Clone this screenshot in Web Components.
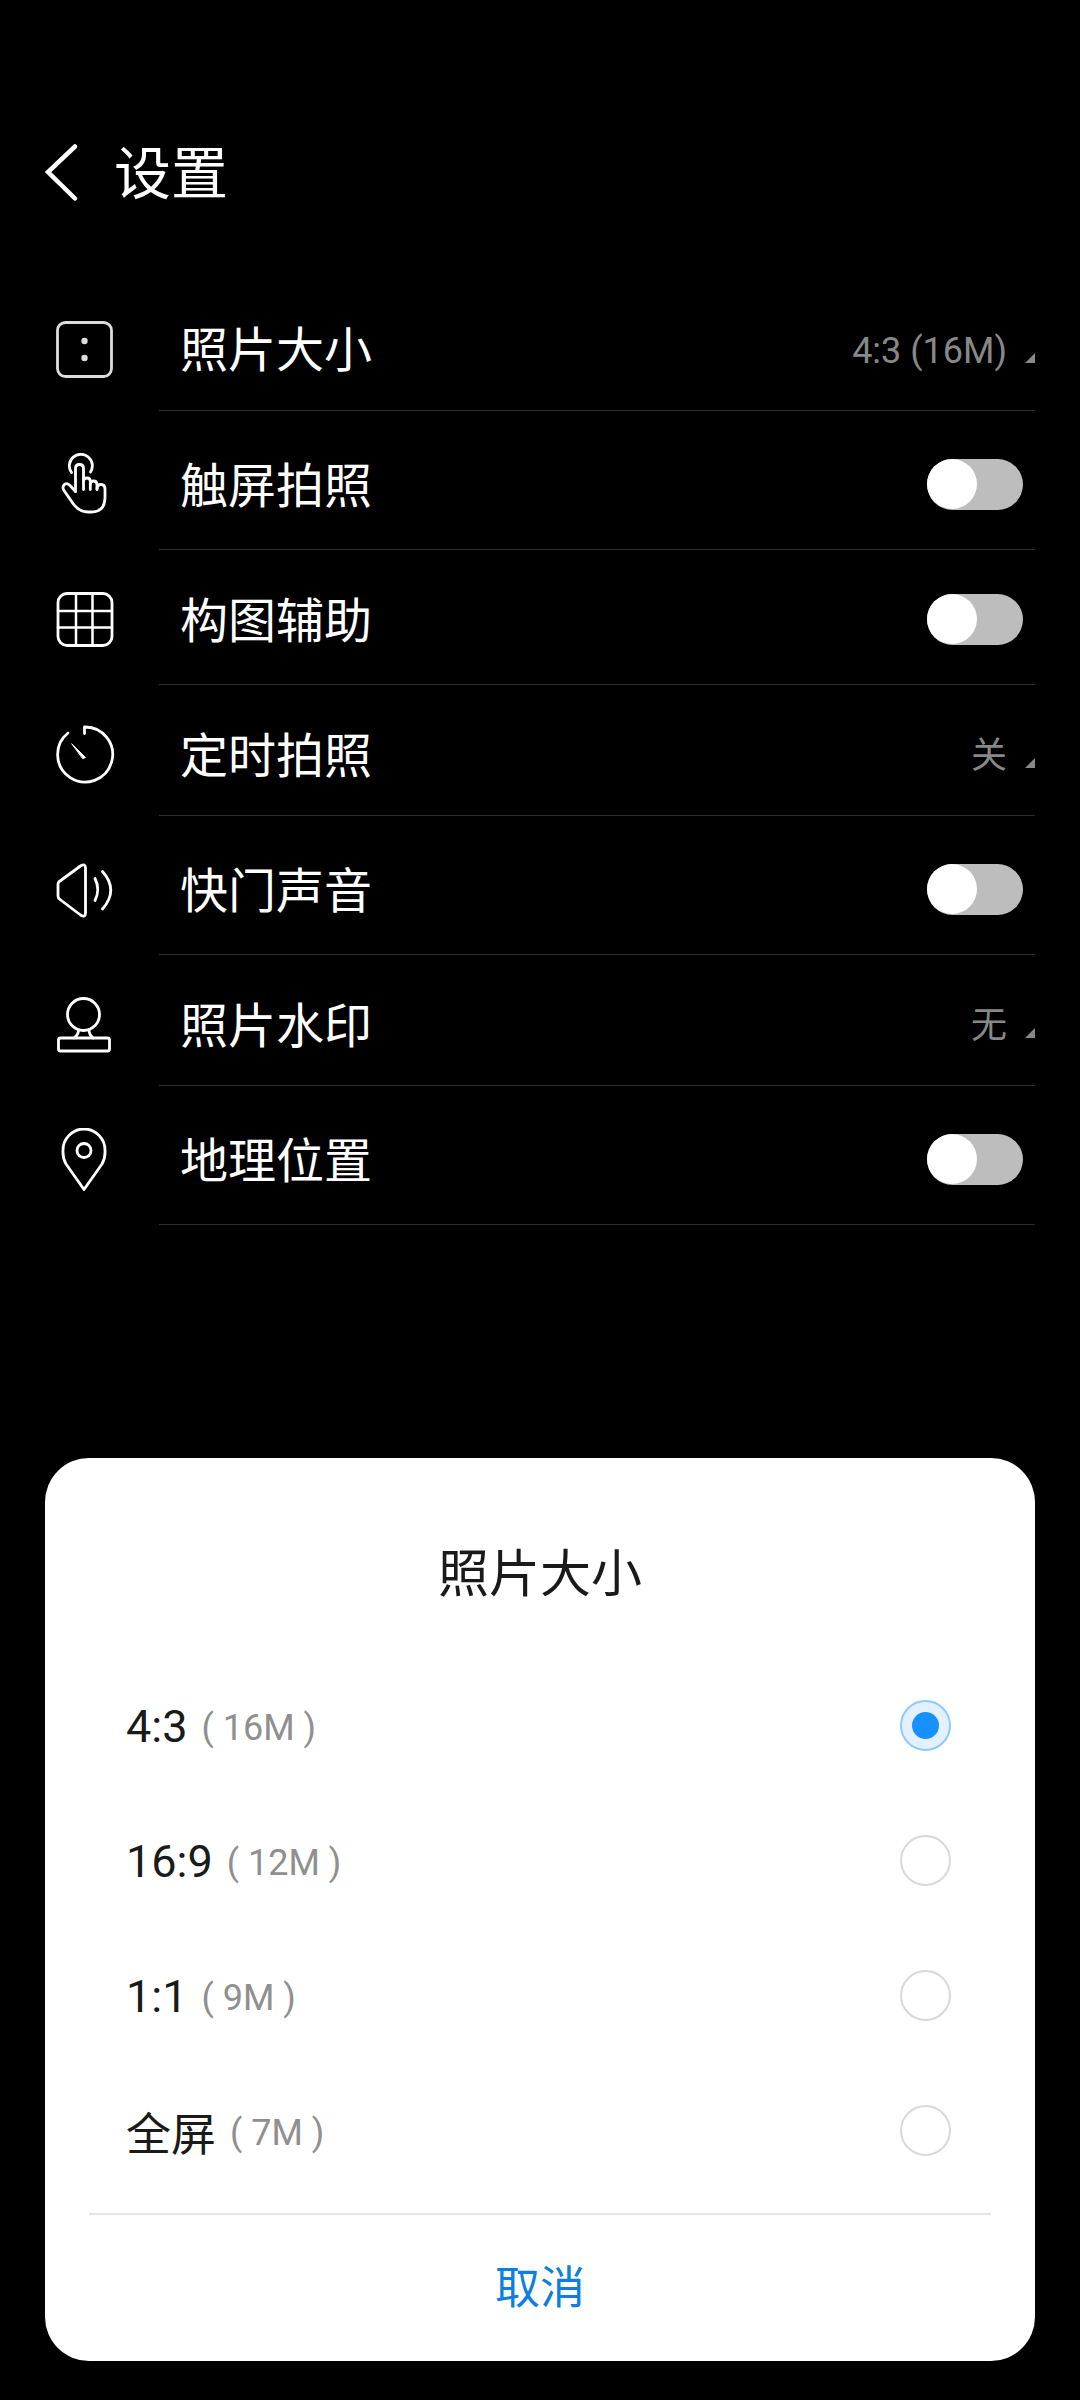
<!DOCTYPE html>
<html lang="zh">
<head>
<meta charset="utf-8">
<style>
    html, body{ margin: 0; background: #000; }
    body{
        width: 1080px;
        height: 2400px;
        overflow: hidden;
        font-family: "Noto Sans CJK SC", "Noto Sans", sans-serif;
    }
    main{
        display: flex;
        flex-direction: column;
        height: 2400px;
    }
</style>
</head>
<body>
<main>
    <settings-header>设置</settings-header>
    <settings-list>
        <setting-row icon="size" height="132" value="4:3 (16M)">照片大小</setting-row>
        <setting-row icon="touch" height="139" toggle>触屏拍照</setting-row>
        <setting-row icon="grid" height="135" lift="4" toggle>构图辅助</setting-row>
        <setting-row icon="timer" height="131" value="关">定时拍照</setting-row>
        <setting-row icon="sound" height="139" toggle>快门声音</setting-row>
        <setting-row icon="stamp" height="131" value="无">照片水印</setting-row>
        <setting-row icon="pin" height="139" toggle>地理位置</setting-row>
    </settings-list>
    <size-dialog heading="照片大小" cancel="取消">
        <size-option ratio="4:3" size="16M" checked></size-option>
        <size-option ratio="16:9" size="12M"></size-option>
        <size-option ratio="1:1" size="9M"></size-option>
        <size-option ratio="全屏" size="7M"></size-option>
    </size-dialog>
</main>

<script>
// svg viewBoxes are in page coords, easier to read off the reference
const ICONS = {
    size: {y: 317, body: `<rect x="57.5" y="322.5" width="54" height="54" rx="8" stroke="#ddd"/>
        <circle cx="84.5" cy="341" r="3.2" fill="#ddd" stroke="none"/>
        <circle cx="84.5" cy="358" r="3.2" fill="#ddd" stroke="none"/>`},
    touch: {y: 452.5, body: `<path d="M71.5 472A11.5 11.5 0 1 1 90.5 471.5"/>
        <path d="M75.5 491L70 485Q66.5 481.5 64 484.5Q62 487 64 490L73 503Q79 511.5 88 511.5H91Q105 511.5 105 497V489Q105 484 101 484Q97 484 97 488.5"/>
        <path d="M97 489V484.5Q97 480.5 93.5 480.5Q90.3 480.5 90.3 484V489"/>
        <path d="M90.3 484V481Q90.3 477.5 87 477.5Q83.5 477.5 83.5 480.5"/>
        <path d="M83.5 489V468Q83.5 464 79.5 464Q75.5 464 75.5 468V491"/>`},
    grid: {y: 587.5, body: `<rect x="58" y="593" width="54" height="52" rx="9"/>
        <path stroke-width="2.5" d="M76 593V645M92.5 593V645M58 610.5H112M58 627H112"/>`},
    timer: {y: 722.5, body: `<path d="M84.5 733V726.500A27.500 27.500 0 1 1 68 732.500"/>
        <path d="M72 743.500L85.500 757L83 758Z" fill="#fff" stroke-width="1"/>`},
    sound: {y: 857.5, body: `<path d="M58 884Q58 881.5 60 880.5L80.5 865.5Q85.5 862.5 85.5 867.5V912.5Q85.5 917.5 80.5 914.5L60 899Q58 897.5 58 895.5Z"/>
        <path d="M95 878Q100.5 889 95 900"/>
        <path d="M102.5 871Q119 889.5 102.5 908.5"/>`},
    stamp: {y: 992.5, body: `<circle cx="83.5" cy="1014" r="16"/>
        <path d="M78.5 1029.5Q78.5 1034 74 1037.5M89 1029.5Q89 1034 93 1037.5"/>
        <rect x="58.5" y="1037.5" width="51" height="13" rx="2"/>`},
    pin: {y: 1127.5, body: `<path d="M84 1189L66 1163.5Q62.5 1157.5 63 1149.5A21 21 0 0 1 105 1149.5Q105.5 1157.5 102 1163.5Z"/>
        <circle cx="84" cy="1150" r="7"/>`}
};

class SettingsHeader extends HTMLElement{
    constructor(){
        super();
        this.attachShadow({mode: 'open'});
        this.shadowRoot.innerHTML = `
            <style>
                :host{
                    display: flex;
                    align-items: center;
                    height: 104px;
                    margin-top: 120px;
                    margin-bottom: 55px;
                    padding-left: 44px;
                    color: #fff;
                    font-size: 57px;
                }
                svg{ width: 36px; height: 60px; margin-right: 34px; flex: none; }
                span{ padding-bottom: 6px; line-height: 80px; }
            </style>
            <svg viewBox="44 142 36 60" fill="none" stroke="#fff" stroke-width="4.5" stroke-linecap="round">
                <path d="M75 146.500L48 172L75 198.500"/>
            </svg>
            <span><slot></slot></span>`;
    }
}

class SettingsList extends HTMLElement{
    constructor(){
        super();
        this.attachShadow({mode: 'open'});
        this.shadowRoot.innerHTML = `
            <style>
                :host{ display: flex; flex-direction: column; padding: 0 45px 0 52px; }
            </style>
            <slot></slot>`;
    }
}

class SettingRow extends HTMLElement{
    constructor(){
        super();
        this.attachShadow({mode: 'open'});
    }

    connectedCallback(){
        const icon = ICONS[this.getAttribute('icon')];
        const lift = this.getAttribute('lift') || 8;
        let right = '';
        if(this.hasAttribute('toggle')){
            right = '<toggle-switch></toggle-switch>';
        } else {
            right = `<span class="value">${this.getAttribute('value')}</span><i class="corner"></i>`;
        }
        this.shadowRoot.innerHTML = `
            <style>
                :host{
                    display: flex;
                    height: ${this.getAttribute('height')}px;
                    box-sizing: border-box;
                }
                svg{ width: 64px; height: 64px; flex: none; align-self: center; margin-top: ${lift}px; }
                .body{
                    flex: 1;
                    display: flex;
                    align-items: center;
                    margin-left: 43px;
                    padding: ${lift}px 0 0 21px;
                    border-bottom: 1px solid #2e2e2e;
                    box-sizing: border-box;
                }
                .label{ flex: 1; padding-bottom: 5px; color: #fff; font-size: 48px; line-height: 64px; }
                .value{
                    padding-top: 4px;
                    color: #888;
                    font-size: 36px;
                    line-height: 48px;
                    font-family: Roboto, "Noto Sans CJK SC", sans-serif;
                }
                .corner{
                    align-self: center;
                    width: 0;
                    height: 0;
                    margin: 18px 0 0 18px;
                    border-style: solid;
                    border-width: 0 0 10px 10px;
                    border-color: transparent transparent #888 transparent;
                }
                toggle-switch{ margin-right: 12px; }
            </style>
            <svg viewBox="52 ${icon.y} 64 64" fill="none" stroke="#fff" stroke-width="2.8" stroke-linecap="round" stroke-linejoin="round">${icon.body}</svg>
            <div class="body">
                <div class="label"><slot></slot></div>
                ${right}
            </div>`;
    }
}

class ToggleSwitch extends HTMLElement{
    constructor(){
        super();
        this.attachShadow({mode: 'open'});
        this.shadowRoot.innerHTML = `
            <style>
                :host{
                    display: flex;
                    width: 96px;
                    height: 51px;
                    border-radius: 26px;
                    background: #bdbdbd;
                }
                b{ width: 50px; height: 50px; margin-top: 0.5px; border-radius: 50%; background: #fff; }
            </style>
            <b></b>`;
    }
}

class SizeDialog extends HTMLElement{
    constructor(){
        super();
        this.attachShadow({mode: 'open'});
    }

    connectedCallback(){
        this.shadowRoot.innerHTML = `
            <style>
                :host{
                    display: flex;
                    flex-direction: column;
                    margin: auto 45px 39px;
                    height: 903px;
                    border-radius: 44px;
                    background: #fff;
                }
                h2{
                    margin: 0;
                    height: 200px;
                    padding-top: 77px;
                    box-sizing: border-box;
                    text-align: center;
                    color: #1a1a1a;
                    font-size: 51px;
                    font-weight: 400;
                    line-height: 70px;
                }
                .cancel{
                    margin: 15px 44px 0;
                    flex: 1;
                    display: flex;
                    align-items: center;
                    justify-content: center;
                    padding-bottom: 7px;
                    border-top: 2px solid #e6e6e6;
                    color: #0c7fe0;
                    font-size: 45px;
                }
            </style>
            <h2>${this.getAttribute('heading')}</h2>
            <slot></slot>
            <div class="cancel">${this.getAttribute('cancel')}</div>`;
    }
}

class SizeOption extends HTMLElement{
    constructor(){
        super();
        this.attachShadow({mode: 'open'});
    }

    connectedCallback(){
        const on = this.hasAttribute('checked');
        this.shadowRoot.innerHTML = `
            <style>
                :host{
                    display: flex;
                    align-items: center;
                    height: 135px;
                    padding: 0 84px 0 81px;
                    font-family: Roboto, "Noto Sans CJK SC", sans-serif;
                }
                .ratio{ padding-top: 2px; color: #1a1a1a; font-size: 45px; }
                .size{ flex: 1; margin-left: 14px; padding-top: 4px; color: #8f8f8f; font-size: 36px; }
                .radio{
                    width: 51px;
                    height: 51px;
                    box-sizing: border-box;
                    display: flex;
                    align-items: center;
                    justify-content: center;
                    border-radius: 50%;
                    border: 2px solid ${on ? '#8ecbf5' : '#d9d9d9'};
                    background: ${on ? '#e3f1fe' : '#fff'};
                }
                .radio b{ width: 27px; height: 27px; border-radius: 50%; background: #1890ff; }
            </style>
            <span class="ratio">${this.getAttribute('ratio')}</span>
            <span class="size">( ${this.getAttribute('size')} )</span>
            <span class="radio">${on ? '<b></b>' : ''}</span>`;
    }
}

customElements.define('settings-header', SettingsHeader);
customElements.define('settings-list', SettingsList);
customElements.define('setting-row', SettingRow);
customElements.define('toggle-switch', ToggleSwitch);
customElements.define('size-dialog', SizeDialog);
customElements.define('size-option', SizeOption);
</script>
</body>
</html>
